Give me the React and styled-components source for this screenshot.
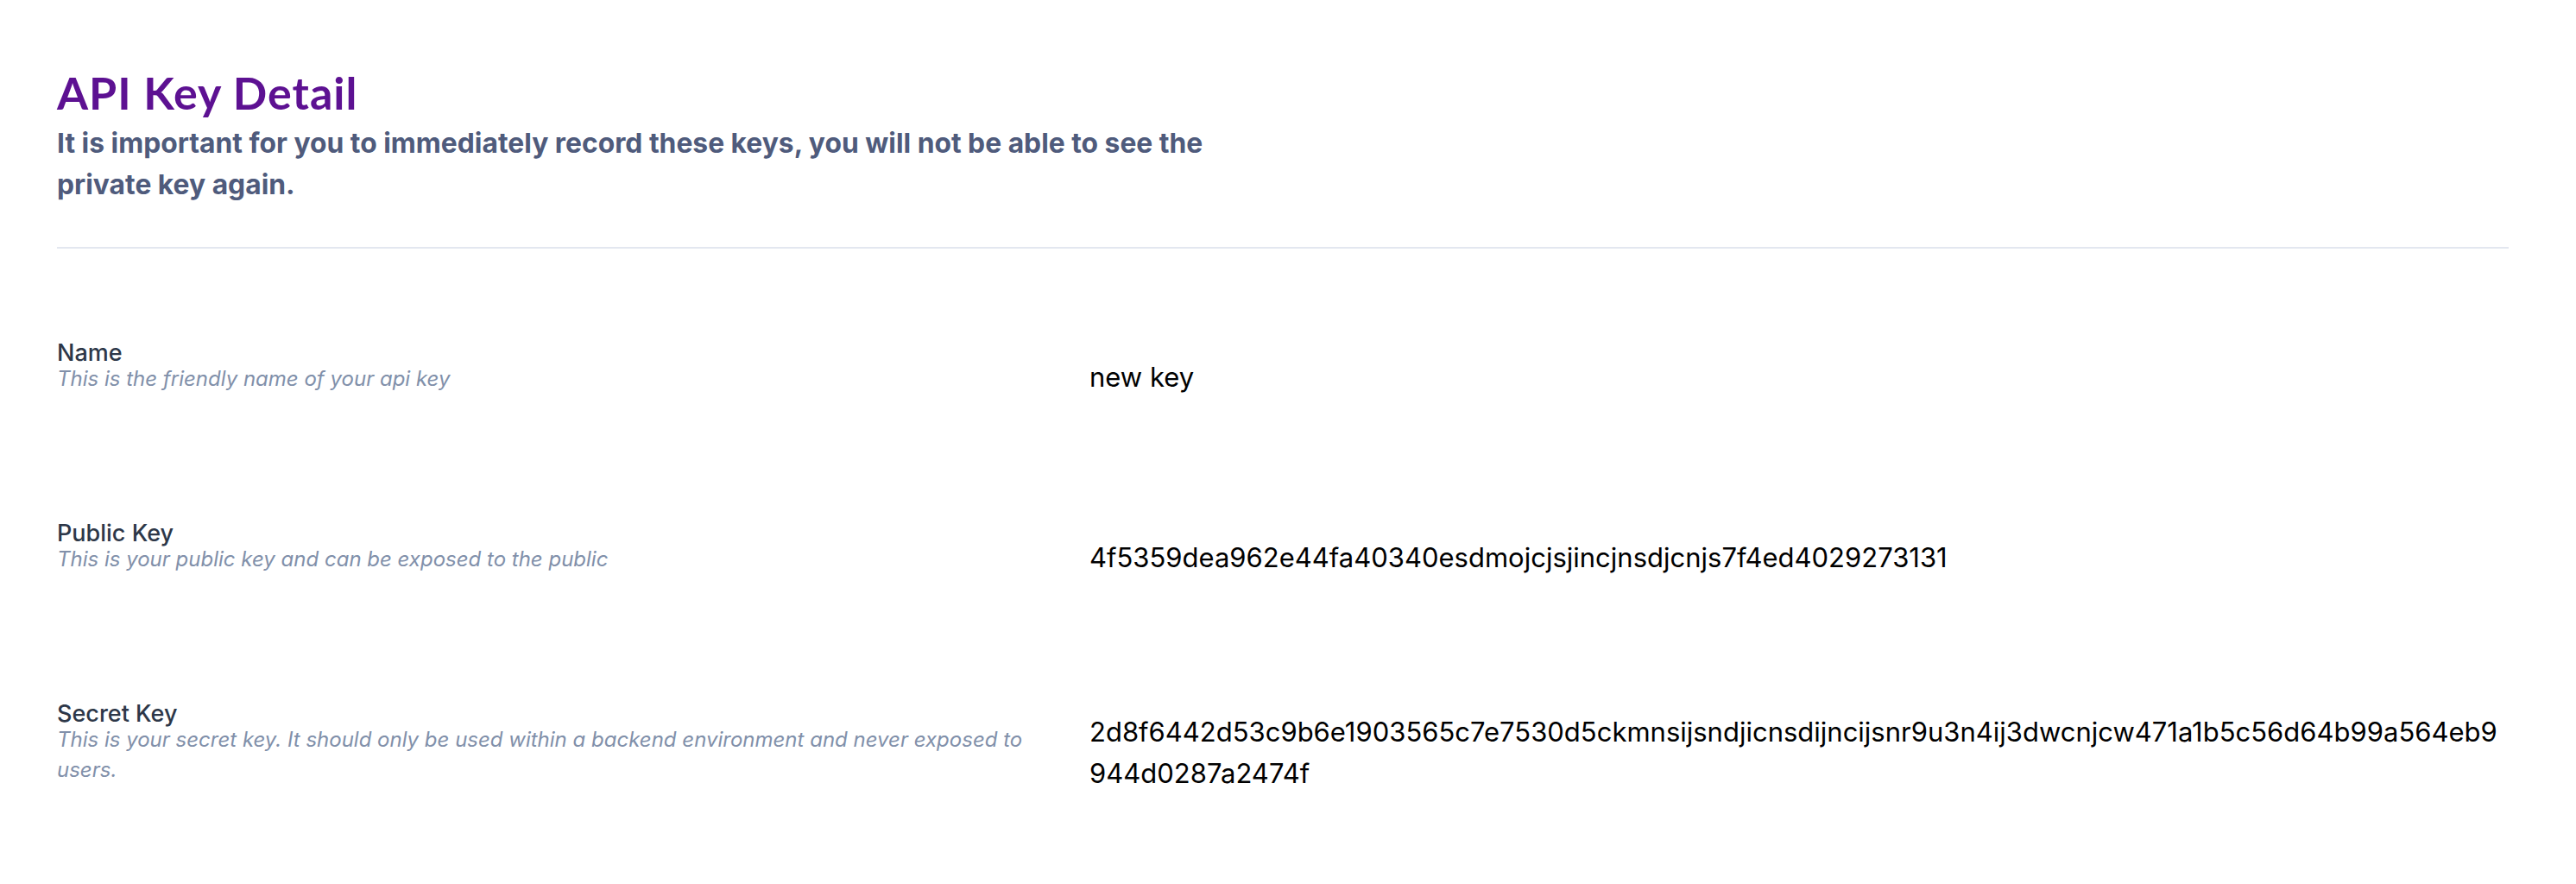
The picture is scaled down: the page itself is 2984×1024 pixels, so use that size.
import styled, { createGlobalStyle } from "styled-components";

const GlobalStyle = createGlobalStyle`
    body {
        margin: 0;
        background: #ffffff;
        font-family: Inter, "Liberation Sans", sans-serif;
    }
`

const Pagina = styled.main`
    padding: 76px 78px 60px 66px;
`

const Cabecalho = styled.header`
    display: flex;
    flex-direction: column;
`

const Titulo = styled.h1`
    margin: 0;
    font-family: Lato, "Noto Sans", sans-serif;
    font-weight: 700;
    font-size: 52px;
    line-height: 62px;
    letter-spacing: 1px;
    color: #5d1192;
`

const Subtitulo = styled.p`
    margin: 4px 0 0 0;
    max-width: 1400px;
    font-family: Inter, sans-serif;
    font-weight: 700;
    font-size: 31.8px;
    line-height: 48px;
    color: #4f5b7c;
`

const Divisor = styled.hr`
    margin: 48px 0 0 0;
    border: none;
    height: 2px;
    background: #e3e7f0;
`

const ListaCampos = styled.section`
    padding-top: 44px;
`

const Campo = styled.div`
    display: grid;
    grid-template-columns: 1196px 1fr;
    align-items: center;
    padding: 65px 0;
`

const Rotulo = styled.div`
    display: flex;
    flex-direction: column;
    padding: 0 64px 20px 0;
`

const RotuloNome = styled.span`
    font-size: 27px;
    line-height: 24px;
    font-weight: 500;
    color: #2d3748;
`

const RotuloDescricao = styled.span`
    font-size: 24px;
    line-height: 35px;
    font-style: italic;
    color: #8190aa;
`

const Valor = styled.div`
    font-size: 31px;
    line-height: 48px;
    color: #000000;
    overflow-wrap: anywhere;
`

const campos = [
    {
        nome: "Name",
        descricao: "This is the friendly name of your api key",
        valor: "new key",
    },
    {
        nome: "Public Key",
        descricao: "This is your public key and can be exposed to the public",
        valor: "4f5359dea962e44fa40340esdmojcjsjincjnsdjcnjs7f4ed4029273131",
    },
    {
        nome: "Secret Key",
        descricao: "This is your secret key. It should only be used within a backend environment and never exposed to users.",
        valor: "2d8f6442d53c9b6e1903565c7e7530d5ckmnsijsndjicnsdijncijsnr9u3n4ij3dwcnjcw471a1b5c56d64b99a564eb9944d0287a2474f",
    },
]

export default function App() {
    return (
        <>
            <GlobalStyle />
            <Pagina>
                <Cabecalho>
                    <Titulo>API Key Detail</Titulo>
                    <Subtitulo>
                        It is important for you to immediately record these keys, you will not be able to see the private key again.
                    </Subtitulo>
                </Cabecalho>
                <Divisor />
                <ListaCampos>
                    {campos.map((campo) => (
                        <Campo key={campo.nome}>
                            <Rotulo>
                                <RotuloNome>{campo.nome}</RotuloNome>
                                <RotuloDescricao>{campo.descricao}</RotuloDescricao>
                            </Rotulo>
                            <Valor>{campo.valor}</Valor>
                        </Campo>
                    ))}
                </ListaCampos>
            </Pagina>
        </>
    );
}
